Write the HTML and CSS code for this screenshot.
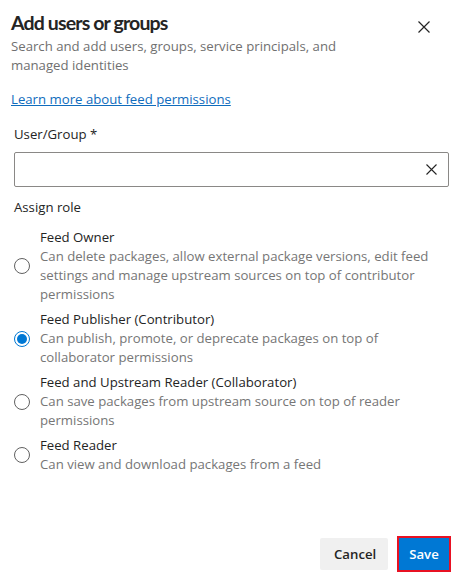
FILE: index.html
```html
<!DOCTYPE html>
<html lang="en">
<head>
<meta charset="utf-8">
<title>Add users or groups</title>
<link rel="stylesheet" href="styles.css">
</head>
<body>
<div class="dialog">
  <div class="header">
    <div class="titles">
      <h1 class="title">Add users or groups</h1>
      <p class="subtitle">Search and add users, groups, service principals, and<br>managed identities</p>
    </div>
    <button class="close" aria-label="Close">
      <svg width="12" height="12" viewBox="0 0 12 12"><path d="M0.5 0.5 L11.5 11.5 M11.5 0.5 L0.5 11.5" stroke="#242424" stroke-width="1.2" fill="none"/></svg>
    </button>
  </div>
  <a class="link" href="#">Learn more about feed permissions</a>
  <div class="field">
    <label class="field-label">User/Group *</label>
    <div class="input">
      <input type="text" class="input-text">
      <svg class="clear" width="11" height="11" viewBox="0 0 11 11"><path d="M0.5 0.5 L10.5 10.5 M10.5 0.5 L0.5 10.5" stroke="#242424" stroke-width="1.1" fill="none"/></svg>
    </div>
  </div>
  <div class="roles">
    <div class="roles-label">Assign role</div>
    <div class="option">
      <span class="radio"></span>
      <div class="option-text">
        <div class="option-title">Feed Owner</div>
        <div class="option-desc">Can delete packages, allow external package versions, edit feed<br>settings and manage upstream sources on top of contributor<br>permissions</div>
      </div>
    </div>
    <div class="option">
      <span class="radio checked"></span>
      <div class="option-text">
        <div class="option-title">Feed Publisher (Contributor)</div>
        <div class="option-desc">Can publish, promote, or deprecate packages on top of<br>collaborator permissions</div>
      </div>
    </div>
    <div class="option">
      <span class="radio"></span>
      <div class="option-text">
        <div class="option-title">Feed and Upstream Reader (Collaborator)</div>
        <div class="option-desc">Can save packages from upstream source on top of reader<br>permissions</div>
      </div>
    </div>
    <div class="option">
      <span class="radio"></span>
      <div class="option-text">
        <div class="option-title">Feed Reader</div>
        <div class="option-desc">Can view and download packages from a feed</div>
      </div>
    </div>
  </div>
  <div class="footer">
    <button class="btn btn-cancel">Cancel</button>
    <button class="btn btn-save">Save</button>
  </div>
</div>
</body>
</html>
```

FILE: styles.css
```css
* { box-sizing: border-box; }
html, body { margin: 0; padding: 0; background: #ffffff; }
body {
  font-family: "Open Sans", "Noto Sans", "Liberation Sans", sans-serif;
  font-size: 13.2px;
  color: #242424;
}
.dialog {
  display: flex;
  flex-direction: column;
  min-height: 579px;
  padding: 9px 12px 9px 11px;
}
.header {
  display: flex;
  justify-content: space-between;
  align-items: flex-start;
}
.title {
  margin: 0;
  font-family: "Lato", "Open Sans", sans-serif;
  font-size: 19.5px;
  font-weight: 700;
  letter-spacing: -0.85px;
  line-height: 28px;
  color: #242424;
}
.subtitle {
  margin: 0;
  font-size: 13.2px;
  line-height: 19px;
  color: #707070;
}
.close {
  border: 0;
  background: transparent;
  padding: 0;
  margin: 11px 18px 0 0;
  width: 14px;
  height: 14px;
  display: flex;
  align-items: center;
  justify-content: center;
}
.link {
  margin-top: 15px;
  align-self: flex-start;
  font-size: 13.2px;
  line-height: 19px;
  color: #0f6cbd;
  text-decoration: underline;
}
.field {
  margin-top: 16px;
  padding-left: 3px;
  display: flex;
  flex-direction: column;
}
.field-label {
  font-size: 13.2px;
  line-height: 19px;
  color: #242424;
}
.input {
  margin-top: 8px;
  height: 35px;
  border: 1px solid #8a8886;
  border-radius: 2px;
  display: flex;
  align-items: center;
  padding: 0 11px 0 8px;
}
.input-text {
  flex: 1;
  border: 0;
  outline: none;
  font: inherit;
  background: transparent;
}
.roles {
  margin-top: 11px;
  padding-left: 3px;
  display: flex;
  flex-direction: column;
  gap: 6px;
}
.roles-label {
  font-size: 13.2px;
  line-height: 19px;
  margin-bottom: 5px;
}
.option {
  display: flex;
  align-items: center;
  gap: 10px;
}
.radio {
  flex: none;
  width: 16px;
  height: 16px;
  border: 1px solid #616161;
  border-radius: 50%;
  position: relative;
}
.radio.checked {
  border-color: #0078d4;
}
.radio.checked::after {
  content: "";
  position: absolute;
  left: 2px;
  top: 2px;
  width: 10px;
  height: 10px;
  border-radius: 50%;
  background: #0078d4;
}
.option-title {
  font-size: 13.2px;
  line-height: 19px;
  color: #242424;
}
.option-desc {
  font-size: 13.2px;
  line-height: 19px;
  color: #767676;
  white-space: nowrap;
}
.footer {
  margin-top: auto;
  display: flex;
  justify-content: flex-end;
  gap: 11px;
}
.btn {
  font: inherit;
  font-size: 13.2px;
  font-weight: 600;
  height: 32px;
  border: 0;
  border-radius: 2px;
  padding: 0 14px;
}
.btn-cancel {
  background: #f0f0f0;
  color: #242424;
  width: 68px;
}
.btn-save {
  background: #0078d4;
  color: #ffffff;
  width: 50px;
  border-radius: 0;
  outline: 2px solid #e81123;
  outline-offset: 0;
  padding: 0;
}
```
